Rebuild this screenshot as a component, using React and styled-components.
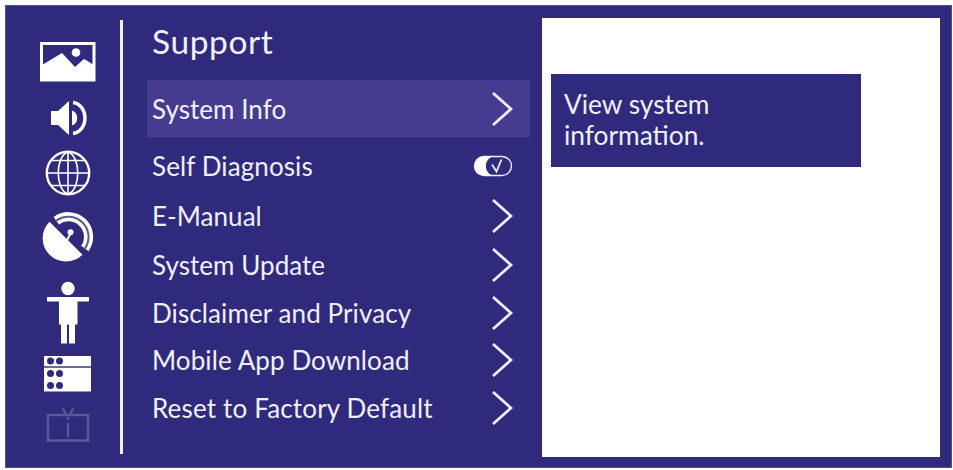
import styled, { createGlobalStyle } from "styled-components";

const GlobalStyle = createGlobalStyle`
  * {
    box-sizing: border-box;
  }
  body {
    margin: 0;
    background-color: #fbfdfd;
    font-family: "Lato", "Carlito", sans-serif;
  }
`;
const Frame = styled.div`
  width: 953px;
  height: 470px;
  padding: 5px 1px 2px 5px;
`;
const Screen = styled.main`
  display: flex;
  height: 463px;
  background-color: #2f2a7c;
  border: 1px solid #524d8c;
`;
const Sidebar = styled.nav`
  width: 114px;
  padding: 35px 0 0 34px;
  display: flex;
  flex-direction: column;
  color: #fff;
`;
const Icon = styled.svg`
  display: block;
  flex: none;
  width: 56px;
  height: ${(props) => props.$height}px;
  margin-bottom: ${(props) => props.$gap || 0}px;
  opacity: ${(props) => (props.$dim ? 0.22 : 1)};
`;
const Divider = styled.div`
  width: 3px;
  height: 434px;
  margin-top: 14px;
  background-color: #f1effc;
`;
const Menu = styled.section`
  width: 419px;
  padding: 14px 0 0 24px;
  color: #f1effc;
`;
const Title = styled.h1`
  height: 60px;
  margin: 0;
  padding-left: 5px;
  font-size: 33.5px;
  font-weight: 400;
  line-height: 43px;
  letter-spacing: 0.6px;
`;
const Row = styled.div`
  display: flex;
  justify-content: space-between;
  align-items: center;
  width: 383px;
  height: ${(props) => props.$height}px;
  padding: 0 17px 0 5px;
  background-color: ${(props) => (props.$active ? "#463c8f" : "transparent")};
`;
const Label = styled.span`
  font-size: 26px;
  line-height: 30px;
  letter-spacing: ${(props) => props.$spacing || 0}px;
  white-space: nowrap;
`;
const Arrow = styled.svg`
  display: block;
  width: 22px;
  height: 36px;
`;
const ToggleIcon = styled.svg`
  display: block;
  width: 40px;
  height: 22px;
`;
const Preview = styled.section`
  width: 398px;
  height: 439px;
  margin-top: 12px;
  padding: 56px 0 0 9px;
  background-color: #fefffe;
`;
const Hint = styled.p`
  width: 310px;
  height: 93px;
  margin: 0;
  padding: 15px 13px;
  background-color: #2f2a7c;
  color: #f1effc;
  font-size: 26.3px;
  line-height: 31px;
`;

const items = [
  { label: "System Info", height: 57, active: true, spacing: 0.05 },
  { label: "Self Diagnosis", height: 57, toggle: true, spacing: 0.1 },
  { label: "E-Manual", height: 44, spacing: 0.05 },
  { label: "System Update", height: 53, spacing: 0.05 },
  { label: "Disclaimer and Privacy", height: 43, spacing: 0.1 },
  { label: "Mobile App Download", height: 51, spacing: 0.1 },
  { label: "Reset to Factory Default", height: 46, spacing: 0.16 },
];

function Toggle() {
  return (
    <ToggleIcon viewBox="0 0 40 22" fill="none">
      <rect x="1.5" y="1.5" width="37" height="19" rx="9.5" stroke="#eeecfa" strokeWidth="1.4" />
      <path d="M11 1.5H20C10.5 4 10.5 18 20 20.5H11A9.5 9.5 0 0 1 11 1.5Z" fill="#fff" />
      <path d="M19 9.5L23.5 16.5L28.5 4.5" stroke="#eeecfa" strokeWidth="1.8" />
    </ToggleIcon>
  );
}

function Chevron() {
  return (
    <Arrow viewBox="0 0 22 36" fill="none" stroke="#eeecfa" strokeWidth="2.8">
      <path d="M2 2L20 18L2 34" />
    </Arrow>
  );
}

function SideIcons() {
  return (
    <Sidebar>
      <Icon viewBox="0 0 56 41" $height={41} $gap={18}>
        <path d="M1.5 2.5H54V39H1.5Z" fill="none" stroke="currentColor" strokeWidth="3" />
        <path d="M2 24L22 12L35 26L44 18L54 24V40H2Z" fill="currentColor" />
        <circle cx="36" cy="11.5" r="4.3" fill="currentColor" />
      </Icon>
      <Icon viewBox="0 0 56 36" $height={36} $gap={14}>
        <path d="M11 11H18L29 1V35L18 25H11Z" fill="currentColor" />
        <path d="M32 10.5A8 8 0 0 1 32 25.5Z" fill="currentColor" />
        <path d="M33 2.5C49 5 49 31 33 33.5" fill="none" stroke="currentColor" strokeWidth="3.4" />
      </Icon>
      <Icon viewBox="0 0 56 46" $height={46} $gap={14} fill="none" stroke="currentColor">
        <circle cx="28" cy="23" r="21.2" strokeWidth="2.4" />
        <path
          d="M28 2V44M7 23H49M11 10.5H45M11 35.5H45M28 2C15 6 15 40 28 44M28 2C41 6 41 40 28 44"
          strokeWidth="1.6"
        />
      </Icon>
      <Icon viewBox="0.5 -0.7 56 54" $height={54} $gap={17} fill="none">
        <path d="M10 11L43 44A23.3 23.3 0 0 1 10 11Z" fill="currentColor" />
        <path d="M27 30L31 23" stroke="currentColor" strokeWidth="2" />
        <circle cx="31" cy="21.5" r="3" fill="currentColor" />
        <path d="M16.8 10A20.2 20.2 0 0 1 45.4 37.8" stroke="currentColor" strokeWidth="9.2" />
        <path d="M16.8 10A20.2 20.2 0 0 1 45.4 37.8" stroke="#5b5886" strokeWidth="2" />
      </Icon>
      <Icon viewBox="0 0 56 63" $height={63} $gap={11} fill="currentColor">
        <circle cx="28" cy="7.5" r="6.7" />
        <path d="M7 16H49V20.5H37.5V43.5H35V62.5H29V43.5H27V62.5H21V43.5H19V20.5H7Z" />
      </Icon>
      <Icon viewBox="0 0 56 37" $height={37} $gap={15}>
        <path d="M4 1H51V36.5H4Z" fill="currentColor" />
        <path d="M4 12H51" stroke="#6e6b91" strokeWidth="2" />
        <g fill="#2f2a7c">
          <circle cx="10.5" cy="6" r="3.5" />
          <circle cx="19.5" cy="6" r="3.5" />
          <circle cx="10.5" cy="18.5" r="3.5" />
          <circle cx="19.5" cy="18.5" r="3.5" />
          <circle cx="10.5" cy="30.5" r="3.5" />
          <circle cx="19.5" cy="30.5" r="3.5" />
        </g>
      </Icon>
      <Icon viewBox="0 0 56 35" $height={35} $dim fill="none" stroke="currentColor">
        <path d="M8 8H48V33.5H8Z" strokeWidth="2.4" />
        <path d="M22.5 1L26 7M33.5 1L30 7M28 10V13M28 16V30" strokeWidth="2.2" />
      </Icon>
    </Sidebar>
  );
}

export default function App() {
  return (
    <>
      <GlobalStyle />
      <Frame>
        <Screen>
          <SideIcons />
          <Divider />
          <Menu>
            <Title>Support</Title>
            {items.map((item) => (
              <Row key={item.label} $height={item.height} $active={item.active}>
                <Label $spacing={item.spacing}>{item.label}</Label>
                {item.toggle ? <Toggle /> : <Chevron />}
              </Row>
            ))}
          </Menu>
          <Preview>
            <Hint>
              View system
              <br />
              information.
            </Hint>
          </Preview>
        </Screen>
      </Frame>
    </>
  );
}
